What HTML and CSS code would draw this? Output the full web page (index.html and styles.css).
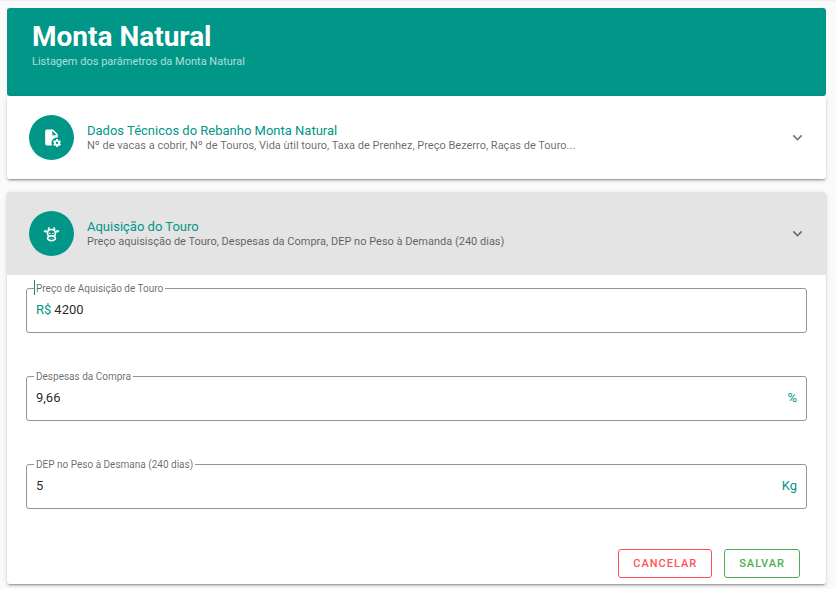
FILE: index.html
```html
<!DOCTYPE html>
<html lang="pt-BR">
<head>
<meta charset="utf-8">
<meta name="viewport" content="width=device-width, initial-scale=1">
<title>Monta Natural</title>
<link rel="stylesheet" href="styles.css">
</head>
<body>
<main class="page">
  <header class="banner">
    <h1 class="banner-title">Monta Natural</h1>
    <p class="banner-subtitle">Listagem dos parâmetros da Monta Natural</p>
  </header>

  <section class="panel">
    <button class="panel-header" type="button" aria-expanded="false">
      <span class="avatar">
        <svg class="icon" viewBox="0 0 24 24" aria-hidden="true"><path d="M6 2C4.89 2 4 2.9 4 4V20C4 21.11 4.89 22 6 22H12.68A7 7 0 0 1 12 19 7 7 0 0 1 19 12 7 7 0 0 1 20 12.08V8L14 2H6M13 3.5L18.5 9H13V3.5M18 14C17.87 14 17.76 14.09 17.74 14.21L17.55 15.53C17.25 15.66 16.96 15.82 16.7 16L15.46 15.5C15.35 15.5 15.22 15.5 15.15 15.63L14.15 17.36C14.09 17.47 14.11 17.6 14.21 17.68L15.27 18.5C15.25 18.67 15.24 18.83 15.24 19C15.24 19.17 15.25 19.33 15.27 19.5L14.21 20.32C14.12 20.4 14.09 20.53 14.15 20.64L15.15 22.37C15.21 22.5 15.34 22.5 15.46 22.5L16.7 22C16.96 22.18 17.24 22.35 17.55 22.47L17.74 23.79C17.76 23.91 17.86 24 18 24H20C20.11 24 20.22 23.91 20.24 23.79L20.43 22.47C20.73 22.34 21 22.18 21.27 22L22.5 22.5C22.63 22.5 22.76 22.5 22.83 22.37L23.83 20.64C23.89 20.53 23.86 20.4 23.77 20.32L22.7 19.5C22.72 19.33 22.74 19.17 22.74 19C22.74 18.83 22.73 18.67 22.7 18.5L23.76 17.68C23.85 17.6 23.88 17.47 23.82 17.36L22.82 15.63C22.76 15.5 22.63 15.5 22.5 15.5L21.27 16C21 15.82 20.73 15.65 20.42 15.53L20.23 14.21C20.22 14.09 20.11 14 20 14H18M19 17.5C19.83 17.5 20.5 18.17 20.5 19C20.5 19.83 19.83 20.5 19 20.5C18.16 20.5 17.5 19.83 17.5 19C17.5 18.17 18.17 17.5 19 17.5Z"/></svg>
      </span>
      <span class="panel-text">
        <span class="panel-title">Dados Técnicos do Rebanho Monta Natural</span>
        <span class="panel-subtitle">Nº de vacas a cobrir, Nº de Touros, Vida ùtil touro, Taxa de Prenhez, Preço Bezerro, Raças de Touro...</span>
      </span>
      <svg class="icon chevron" viewBox="0 0 24 24" aria-hidden="true"><path d="M7.41,8.58L12,13.17L16.59,8.58L18,10L12,16L6,10L7.41,8.58Z"/></svg>
    </button>
  </section>

  <section class="panel panel-open">
    <button class="panel-header" type="button" aria-expanded="true">
      <span class="avatar">
        <svg class="icon" viewBox="0 0 24 24" aria-hidden="true"><path d="M10.5,18A0.5,0.5 0 0,1 11,18.5A0.5,0.5 0 0,1 10.5,19A0.5,0.5 0 0,1 10,18.5A0.5,0.5 0 0,1 10.5,18M13.5,18A0.5,0.5 0 0,1 14,18.5A0.5,0.5 0 0,1 13.5,19A0.5,0.5 0 0,1 13,18.5A0.5,0.5 0 0,1 13.5,18M10,11A1,1 0 0,1 11,12A1,1 0 0,1 10,13A1,1 0 0,1 9,12A1,1 0 0,1 10,11M14,11A1,1 0 0,1 15,12A1,1 0 0,1 14,13A1,1 0 0,1 13,12A1,1 0 0,1 14,11M18,18C18,20.21 15.31,22 12,22C8.69,22 6,20.21 6,18C6,17.1 6.45,16.27 7.2,15.6C6.45,14.6 6,13.35 6,12L6.12,10.78C5.58,10.93 4.93,10.93 4.4,10.78C3.38,10.5 1.84,9.35 2.07,8.55C2.3,7.75 4.21,7.6 5.23,7.9C5.82,8.07 6.45,8.5 6.82,8.96L7.39,8.15C6.79,7.05 7,4 10,3L9.91,3.14V3.14C9.63,3.58 8.91,4.97 9.67,6.47C10.39,6.17 11.17,6 12,6C12.83,6 13.61,6.17 14.33,6.47C15.09,4.97 14.37,3.58 14.09,3.14L14,3C17,4 17.21,7.05 16.61,8.15L17.18,8.96C17.55,8.5 18.18,8.07 18.77,7.9C19.79,7.6 21.7,7.75 21.93,8.55C22.16,9.35 20.62,10.5 19.6,10.78C19.07,10.93 18.42,10.93 17.88,10.78L18,12C18,13.35 17.55,14.6 16.8,15.6C17.55,16.27 18,17.1 18,18M12,16C9.79,16 8,16.9 8,18C8,19.1 9.79,20 12,20C14.21,20 16,19.1 16,18C16,16.9 14.21,16 12,16M12,14C13.12,14 14.17,14.21 15.07,14.56C15.65,13.87 16,13 16,12A4,4 0 0,0 12,8A4,4 0 0,0 8,12C8,13 8.35,13.87 8.93,14.56C9.83,14.21 10.88,14 12,14Z"/></svg>
      </span>
      <span class="panel-text">
        <span class="panel-title">Aquisição do Touro</span>
        <span class="panel-subtitle">Preço aquisisção de Touro, Despesas da Compra, DEP no Peso à Demanda (240 dias)</span>
      </span>
      <svg class="icon chevron" viewBox="0 0 24 24" aria-hidden="true"><path d="M7.41,8.58L12,13.17L16.59,8.58L18,10L12,16L6,10L7.41,8.58Z"/></svg>
    </button>

    <form class="panel-form">
      <div class="field field-active">
        <label class="field-label" for="preco">Preço de Aquisição de Touro</label>
        <span class="affix">R$</span>
        <input class="field-input" id="preco" type="text" value="4200">
      </div>
      <div class="field">
        <label class="field-label" for="despesas">Despesas da Compra</label>
        <input class="field-input" id="despesas" type="text" value="9,66">
        <span class="affix">%</span>
      </div>
      <div class="field">
        <label class="field-label" for="dep">DEP no Peso à Desmana (240 dias)</label>
        <input class="field-input" id="dep" type="text" value="5">
        <span class="affix">Kg</span>
      </div>
      <div class="actions">
        <button class="btn btn-cancel" type="button">CANCELAR</button>
        <button class="btn btn-save" type="button">SALVAR</button>
      </div>
    </form>
  </section>
</main>
</body>
</html>
```

FILE: styles.css
```css
:root {
  --teal: #009688;
  --red: #ff5252;
  --green: #4caf50;
  --muted: rgba(0, 0, 0, 0.6);
  --elevation: 0 3px 1px -2px rgba(0, 0, 0, 0.2), 0 2px 2px 0 rgba(0, 0, 0, 0.14), 0 1px 5px 0 rgba(0, 0, 0, 0.12);
}

* {
  box-sizing: border-box;
}

body {
  margin: 0;
  background: #fafafa;
  color: rgba(0, 0, 0, 0.87);
  font-family: Roboto, "Liberation Sans", sans-serif;
  font-size: 13px;
}

button,
input {
  font: inherit;
}

.page {
  padding: 8px 10px 4px 7px;
  box-shadow: inset 0 2px 2px -1px rgba(0, 0, 0, 0.06);
}

.banner {
  min-height: 88px;
  padding: 12px 25px;
  border-radius: 3px;
  background: var(--teal);
  color: #fff;
}

.banner-title {
  margin: 0;
  font-size: 28px;
  font-weight: 700;
  line-height: 34px;
}

.banner-subtitle {
  margin: 0;
  color: rgba(255, 255, 255, 0.7);
  font-size: 11px;
  line-height: 16px;
}

.panel {
  border-radius: 3px;
  background: #fff;
  box-shadow: var(--elevation);
}

.panel-open {
  margin-top: 13px;
}

.panel-header {
  display: flex;
  align-items: center;
  gap: 13px;
  width: 100%;
  padding: 19px 19px 19px 22px;
  border: 0;
  border-radius: 3px;
  background: transparent;
  text-align: left;
  cursor: pointer;
}

.panel-open .panel-header {
  border-radius: 3px 3px 0 0;
  background: #e4e4e4;
}

.avatar {
  display: flex;
  flex: none;
  align-items: center;
  justify-content: center;
  width: 45px;
  height: 45px;
  border-radius: 50%;
  background: var(--teal);
  color: #fff;
}

.icon {
  width: 19px;
  height: 19px;
  fill: currentColor;
}

.chevron {
  flex: none;
  color: rgba(0, 0, 0, 0.54);
}

.panel-text {
  display: flex;
  flex: 1;
  flex-direction: column;
}

.panel-title {
  color: var(--teal);
  font-size: 13px;
  line-height: 16px;
}

.panel-subtitle {
  color: var(--muted);
  font-size: 11px;
  line-height: 14px;
}

.panel-form {
  display: flex;
  flex-direction: column;
  gap: 43px;
  padding: 13px 19px 6px;
}

.field {
  position: relative;
  display: flex;
  align-items: center;
  gap: 3px;
  height: 45px;
  padding: 0 9px 2px;
  border: 1px solid #949494;
  border-radius: 3px;
}

.field-label {
  position: absolute;
  top: -6px;
  left: 7px;
  padding: 0 2px;
  background: #fff;
  color: var(--muted);
  font-size: 10px;
  line-height: 12px;
}

/* Caret bar at the start of the active label */
.field-active::before {
  content: "";
  position: absolute;
  z-index: 1;
  top: -9px;
  left: 7px;
  width: 1px;
  height: 15px;
  background: var(--teal);
}

.field-input {
  flex: 1;
  min-width: 0;
  padding: 0;
  border: 0;
  outline: 0;
  background: transparent;
  color: inherit;
  line-height: 16px;
}

.affix {
  color: var(--teal);
  line-height: 16px;
}

.actions {
  display: flex;
  justify-content: flex-end;
  gap: 12px;
  margin-top: -3px;
  padding-right: 7px;
}

.btn {
  height: 29px;
  padding: 0 14px;
  border: 1px solid currentColor;
  border-radius: 3px;
  background: transparent;
  font-size: 11px;
  font-weight: 500;
  letter-spacing: 1px;
  cursor: pointer;
}

.btn-cancel {
  color: var(--red);
}

.btn-save {
  color: var(--green);
}
```
